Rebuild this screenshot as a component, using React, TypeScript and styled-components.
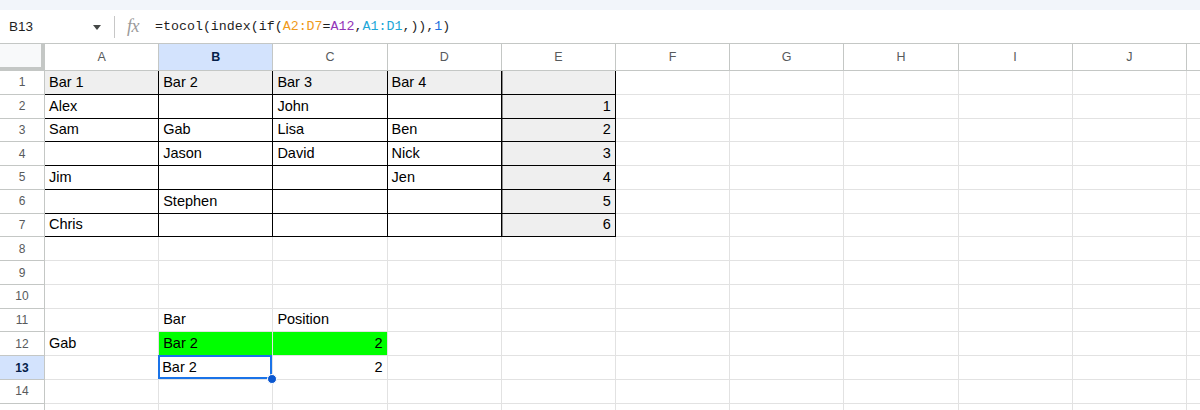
import React from "react";
import styled, { createGlobalStyle } from "styled-components";

const GlobalStyle = createGlobalStyle`
  html, body {
    margin: 0;
    padding: 0;
    background: #ffffff;
    font-family: "Liberation Sans", Arial, sans-serif;
    overflow: hidden;
  }
`;

const Page = styled.div`
  width: 1200px;
  height: 410px;
  overflow: hidden;
  display: flex;
  flex-direction: column;
`;

const TopStrip = styled.div`
  height: 10px;
  background: #f2f5fa;
  flex-shrink: 0;
`;

const FormulaBar = styled.div`
  height: 33px;
  flex-shrink: 0;
  display: flex;
  align-items: center;
  border-bottom: 1px solid #c4c7c5;
  background: #ffffff;
`;

const NameBox = styled.div`
  width: 114px;
  box-sizing: border-box;
  padding: 0 13px 0 9px;
  display: flex;
  align-items: center;
  justify-content: space-between;
  font-size: 13.5px;
  color: #1f1f1f;
`;

const Caret = styled.span`
  width: 0;
  height: 0;
  border-left: 4.5px solid transparent;
  border-right: 4.5px solid transparent;
  border-top: 5px solid #444746;
  margin-top: 1px;
`;

const Divider = styled.span`
  width: 1px;
  height: 22px;
  background: #c7c7c7;
`;

const Fx = styled.span`
  margin-left: 12px;
  width: 18px;
  font-family: "Liberation Serif", "Times New Roman", serif;
  font-style: italic;
  font-size: 18px;
  color: #9a9a9a;
  letter-spacing: -0.5px;
`;

const Formula = styled.div`
  margin-left: 10px;
  font-family: "Liberation Mono", "DejaVu Sans Mono", monospace;
  font-size: 13.3px;
  color: #1f1f1f;
  white-space: pre;
`;

const Tok = styled.span<{ $c?: string }>`
  color: ${(p) => p.$c || "#1f1f1f"};
`;

const Grid = styled.div`
  display: grid;
  grid-template-columns: 45px repeat(11, 114.2px);
  grid-template-rows: 27px repeat(15, 23.77px);
`;

const Corner = styled.div`
  background: #f8f9fa;
  border-right: 4px solid #c4c7c5;
  border-bottom: 4px solid #c4c7c5;
  box-sizing: border-box;
`;

const ColHead = styled.div<{ $active?: boolean }>`
  box-sizing: border-box;
  border-right: 1px solid #c4c7c5;
  border-bottom: 1px solid #c4c7c5;
  background: ${(p) => (p.$active ? "#d3e3fd" : "#ffffff")};
  color: ${(p) => (p.$active ? "#041e49" : "#575a5c")};
  font-weight: ${(p) => (p.$active ? 700 : 400)};
  font-size: 12.5px;
  display: flex;
  align-items: center;
  justify-content: center;
`;

const RowHead = styled.div<{ $active?: boolean }>`
  box-sizing: border-box;
  border-right: 1px solid #c4c7c5;
  border-bottom: 1px solid #c4c7c5;
  background: ${(p) => (p.$active ? "#d3e3fd" : "#ffffff")};
  color: ${(p) => (p.$active ? "#041e49" : "#575a5c")};
  font-weight: ${(p) => (p.$active ? 700 : 400)};
  font-size: 12px;
  display: flex;
  align-items: center;
  justify-content: center;
`;

const Cell = styled.div<{
  $bg?: string;
  $right?: boolean;
  $line?: string;
  $edge?: string;
  $selected?: boolean;
}>`
  position: relative;
  box-sizing: border-box;
  border-right: 1px solid ${(p) => p.$line || "#e2e2e2"};
  border-bottom: 1px solid ${(p) => p.$line || "#e2e2e2"};
  background: ${(p) => p.$bg || "#ffffff"};
  font-size: 14.5px;
  color: #000000;
  padding: 0 4px 4px 4px;
  display: flex;
  align-items: flex-end;
  justify-content: ${(p) => (p.$right ? "flex-end" : "flex-start")};
  white-space: nowrap;
  box-shadow: ${(p) =>
    p.$selected
      ? "inset 0 0 0 2px #1a73e8"
      : p.$edge
      ? `inset 1px 0 0 ${p.$edge}`
      : "none"};
  ${(p) => (p.$selected ? "margin: -1px 0 0 -1px; z-index: 2;" : "")}
`;

const Handle = styled.span`
  position: absolute;
  right: -5px;
  bottom: -5px;
  width: 8px;
  height: 8px;
  border-radius: 50%;
  background: #0b57d0;
  border: 1px solid #ffffff;
`;

const cols = ["A", "B", "C", "D", "E", "F", "G", "H", "I", "J", "K"];

const data: Record<number, string[]> = {
  1: ["Bar 1", "Bar 2", "Bar 3", "Bar 4", ""],
  2: ["Alex", "", "John", "", "1"],
  3: ["Sam", "Gab", "Lisa", "Ben", "2"],
  4: ["", "Jason", "David", "Nick", "3"],
  5: ["Jim", "", "", "Jen", "4"],
  6: ["", "Stephen", "", "", "5"],
  7: ["Chris", "", "", "", "6"],
  11: ["", "Bar", "Position"],
  12: ["Gab", "Bar 2", "2"],
  13: ["", "Bar 2", "2"],
};

const formula: [string, string?][] = [
  ["=tocol(index(if("],
  ["A2:D7", "#f09a1a"],
  ["="],
  ["A12", "#9334b8"],
  [","],
  ["A1:D1", "#1ea7d8"],
  [",)),"],
  ["1", "#1a6fe0"],
  [")"],
];

function cellProps(r: number, c: number) {
  const text = (data[r] && data[r][c]) || "";
  const inBlock = r <= 7 && c <= 4;
  let bg: string | undefined;
  if (inBlock && (r === 1 || c === 4)) bg = "#efefef";
  if (r === 12 && (c === 1 || c === 2)) bg = "#00ff00";
  const right = /^\d+$/.test(text);
  return {
    text,
    bg,
    right,
    line: inBlock ? "#000000" : undefined,
    edge: inBlock && c === 4 ? "#8a8a8a" : undefined,
    selected: r === 13 && c === 1,
  };
}

export default function App() {
  const rows = Array.from({ length: 15 }, (_, i) => i + 1);
  return (
    <Page>
      <GlobalStyle />
      <TopStrip />
      <FormulaBar>
        <NameBox>
          B13
          <Caret />
        </NameBox>
        <Divider />
        <Fx>fx</Fx>
        <Formula>
          {formula.map(([t, c], i) => (
            <Tok key={i} $c={c}>
              {t}
            </Tok>
          ))}
        </Formula>
      </FormulaBar>
      <Grid>
        <Corner />
        {cols.map((c) => (
          <ColHead key={c} $active={c === "B"}>
            {c}
          </ColHead>
        ))}
        {rows.map((r) => (
          <React.Fragment key={r}>
            <RowHead $active={r === 13}>{r}</RowHead>
            {cols.map((_, c) => {
              const p = cellProps(r, c);
              return (
                <Cell
                  key={c}
                  $bg={p.bg}
                  $right={p.right}
                  $line={p.line}
                  $edge={p.edge}
                  $selected={p.selected}
                >
                  {p.text}
                  {p.selected && <Handle />}
                </Cell>
              );
            })}
          </React.Fragment>
        ))}
      </Grid>
    </Page>
  );
}
